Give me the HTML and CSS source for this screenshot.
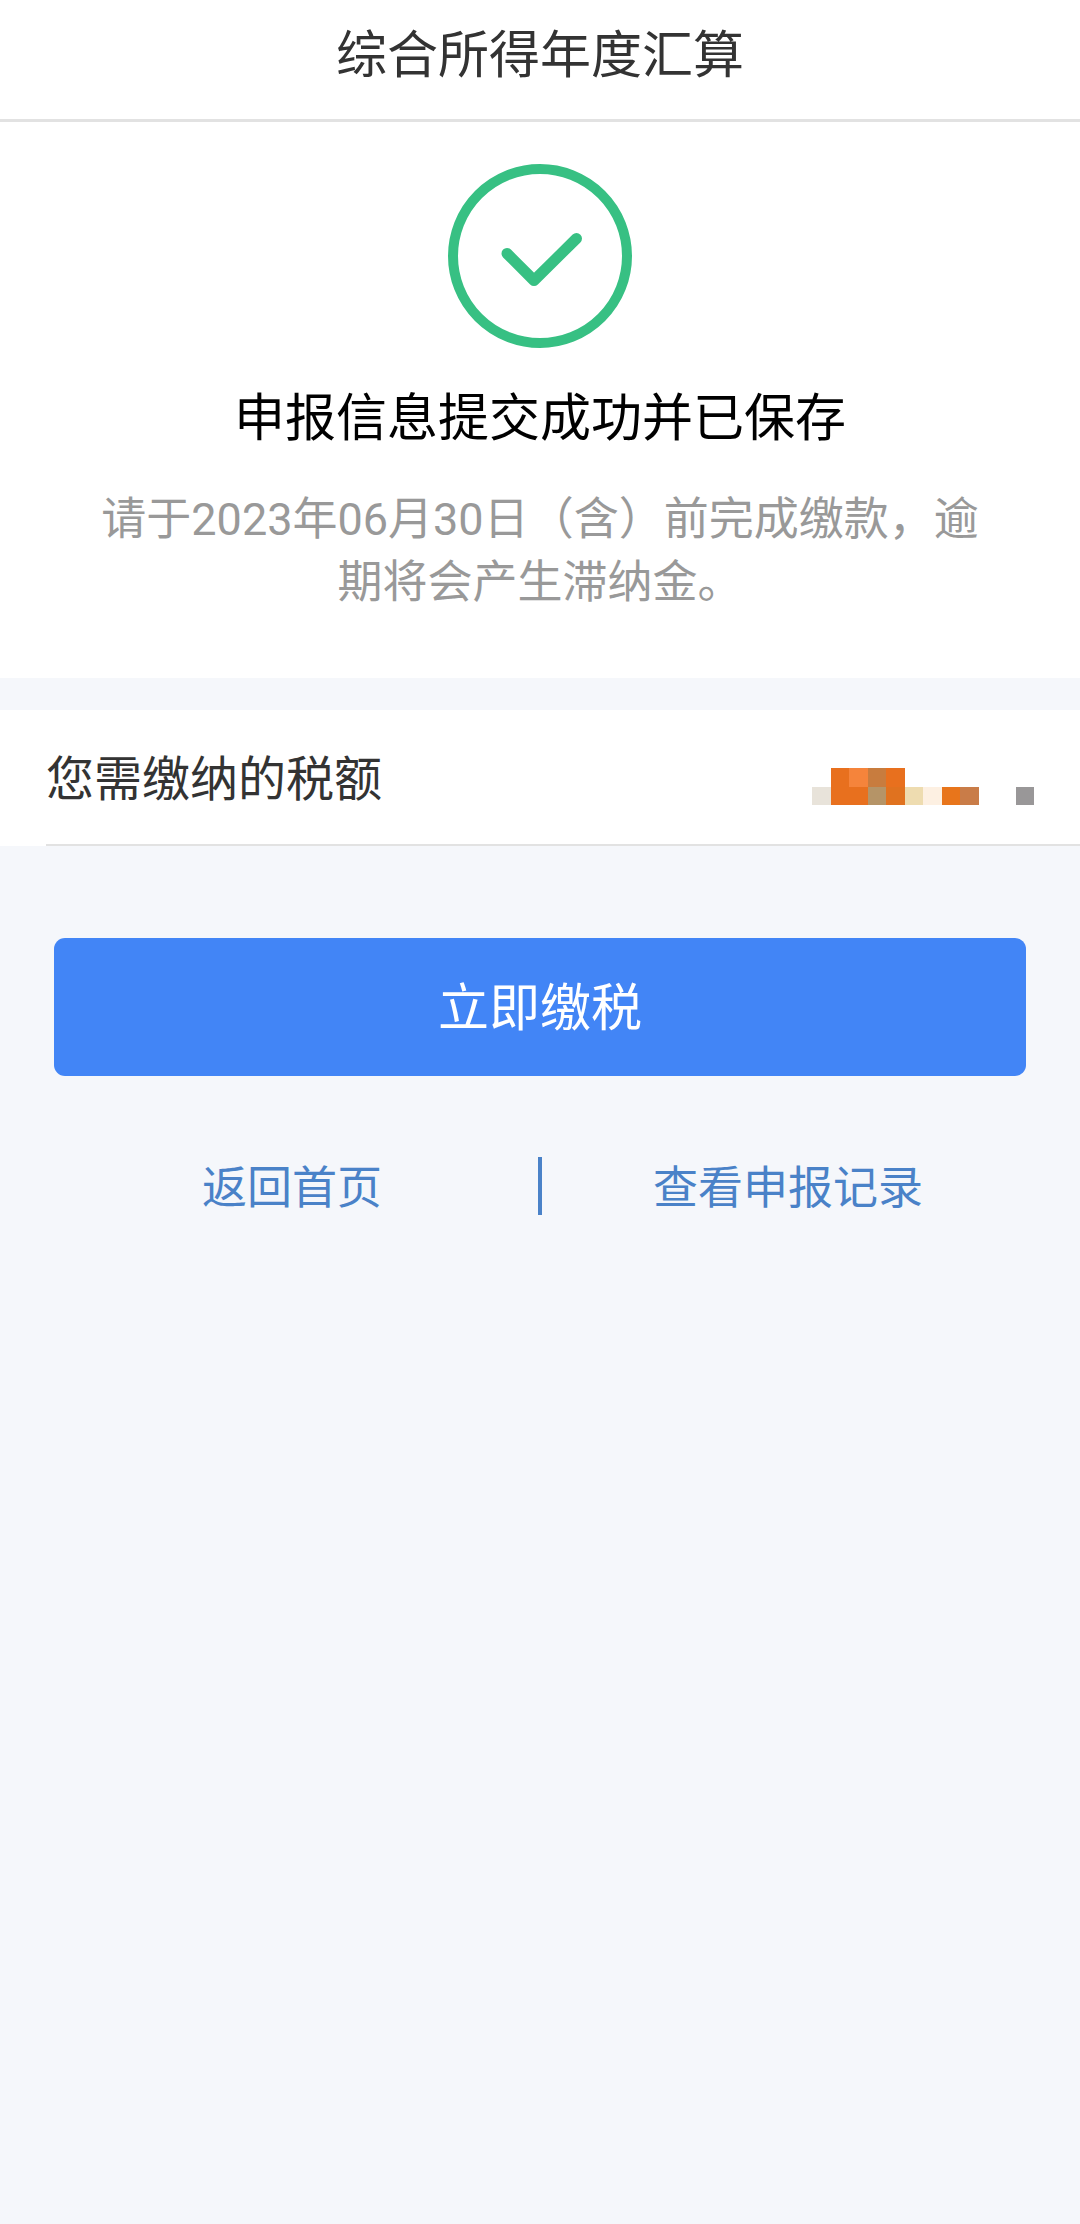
FILE: index.html
```html
<!DOCTYPE html>
<html lang="zh-CN">
<head>
  <meta charset="UTF-8">
  <title>综合所得年度汇算</title>
  <link rel="stylesheet" href="styles.css">
</head>
<body>
  <header class="header">
    <h1>综合所得年度汇算</h1>
  </header>

  <div class="result">
    <svg class="result-icon" viewBox="0 0 184 184" fill="none" stroke="#37c083">
      <circle cx="92" cy="92" r="87" stroke-width="10"/>
      <path d="M59 89.5 L86 116.5 L128.5 74.5" stroke-width="11" stroke-linecap="round" stroke-linejoin="round"/>
    </svg>
    <h2>申报信息提交成功并已保存</h2>
    <p>请于2023年06月30日（含）前完成缴款，逾期将会产生滞纳金。</p>
  </div>

  <div class="tax-row">
    <span class="tax-label">您需缴纳的税额</span>
    <!-- 金额打码 -->
    <svg class="tax-amount" viewBox="0 0 12 2" preserveAspectRatio="none" shape-rendering="crispEdges">
      <rect x="0" y="1" width="1" height="1" fill="#e8e3da"/>
      <rect x="1" y="0" width="4" height="2" fill="#e8701e"/>
      <rect x="2" y="0" width="1" height="1" fill="#f5843b"/>
      <rect x="3" y="0" width="1" height="1" fill="#c87c3e"/>
      <rect x="3" y="1" width="1" height="1" fill="#b59467"/>
      <rect x="4" y="1" width="1" height="1" fill="#e0721f"/>
      <rect x="5" y="1" width="1" height="1" fill="#eedcb0"/>
      <rect x="6" y="1" width="1" height="1" fill="#fdf0e2"/>
      <rect x="7" y="1" width="1" height="1" fill="#e8751b"/>
      <rect x="8" y="1" width="1" height="1" fill="#c97c48"/>
      <rect x="11" y="1" width="1" height="1" fill="#999798"/>
    </svg>
  </div>

  <button class="pay-button">立即缴税</button>

  <div class="links">
    <a href="#">返回首页</a>
    <span class="divider"></span>
    <a href="#">查看申报记录</a>
  </div>
</body>
</html>
```

FILE: styles.css
```css
* {
  box-sizing: border-box;
}

body {
  margin: 0;
  min-height: 100vh;
  background-color: #f5f7fb;
  font-family: Roboto, 'Noto Sans CJK SC', sans-serif;
  color: #333;
}

h1, h2, p {
  margin: 0;
  font-weight: normal;
}

.header {
  height: 122px;
  padding-top: 20px;
  background: white;
  border-bottom: 3px solid #e2e2e2;
  text-align: center;
}

.header h1 {
  font-size: 51px;
  line-height: 72px;
}

.result {
  height: 556px;
  padding: 42px 90px 0;
  background: white;
  text-align: center;
}

.result-icon {
  display: block;
  width: 184px;
  height: 184px;
  margin: 0 auto;
}

.result h2 {
  margin-top: 35px;
  font-size: 51px;
  line-height: 72px;
  color: #000;
}

.result p {
  margin-top: 33px;
  font-size: 45px;
  line-height: 63px;
  color: #999;
}

.tax-row {
  display: flex;
  align-items: center;
  justify-content: space-between;
  height: 136px;
  margin-top: 32px;
  padding: 0 46px;
  background: linear-gradient(#e2e2e2, #e2e2e2) 46px 100% / 100% 2px no-repeat white;
  font-size: 48px;
}

.tax-label {
  padding-bottom: 6px;
}

.tax-amount {
  width: 222px;
  height: 37px;
  margin-top: 17px;
}

.pay-button {
  display: block;
  width: 972px;
  height: 138px;
  margin: 92px auto 0;
  padding: 0 0 6px;
  border: none;
  border-radius: 11px;
  background-color: #4285f6;
  color: white;
  font-family: inherit;
  font-size: 51px;
  cursor: pointer;
}

.links {
  display: flex;
  align-items: center;
  margin-top: 81px;
  padding: 0 46px;
}

.links a {
  flex: 1;
  padding-top: 6px;
  font-size: 45px;
  line-height: 52px;
  text-align: center;
  text-decoration: none;
  color: #4a82c8;
}

.divider {
  width: 4px;
  height: 58px;
  background: #4a82c8;
}
```
